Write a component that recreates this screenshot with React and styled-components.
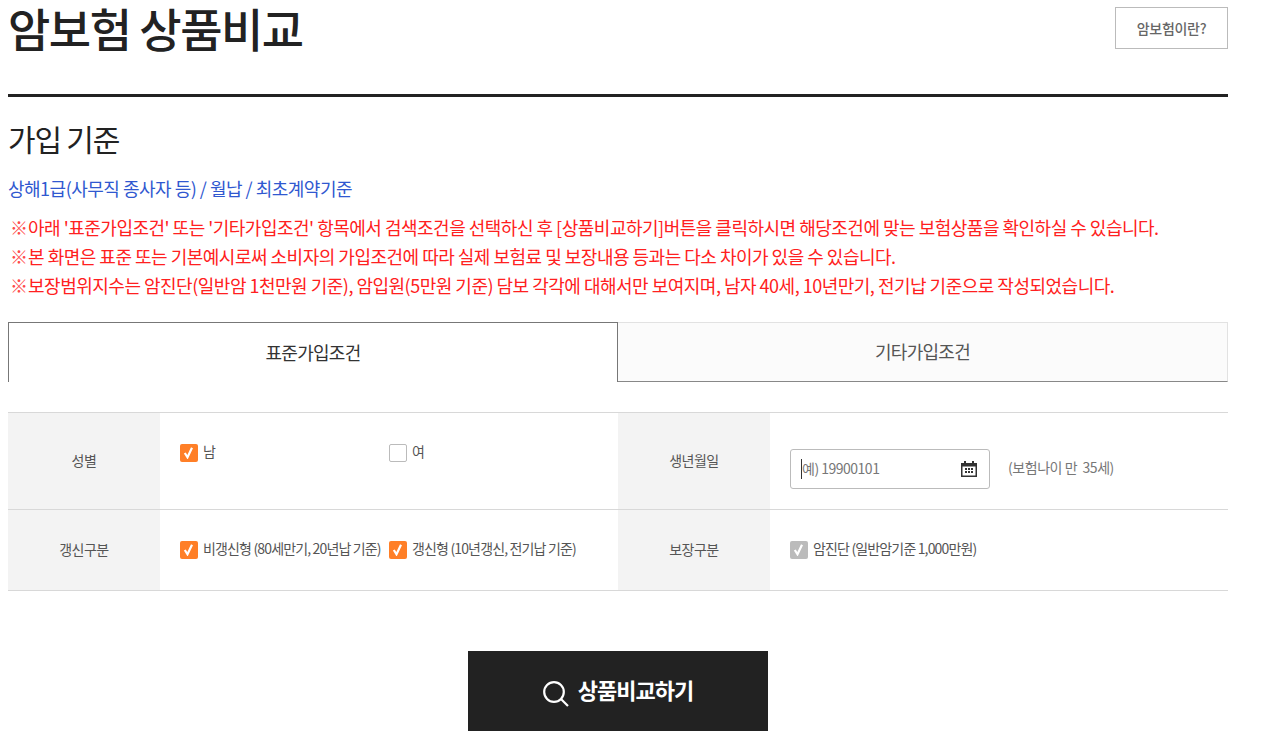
import React from "react";
import styled, { createGlobalStyle } from "styled-components";

const GlobalStyle = createGlobalStyle`
  html, body {
    margin: 0;
    padding: 0;
    background: #fff;
    font-family: "Noto Sans CJK KR", "Noto Sans", sans-serif;
    color: #222;
  }
`;

const Page = styled.div`
  width: 1220px;
  margin-left: 8px;
  padding-bottom: 20px;
`;

const Header = styled.header`
  display: flex;
  justify-content: space-between;
  align-items: flex-start;
  height: 94px;
  border-bottom: 3px solid #222;
`;

const Title = styled.h1`
  margin: 0;
  font-size: 46px;
  line-height: 54px;
  font-weight: 500;
  letter-spacing: -1.5px;
  color: #222;
`;

const HelpButton = styled.button`
  width: 113px;
  height: 42px;
  margin-top: 7px;
  background: #fff;
  border: 1px solid #bbb;
  font: 500 14px "Noto Sans CJK KR", sans-serif;
  letter-spacing: -0.3px;
  color: #666;
`;

const SectionTitle = styled.h2`
  margin: 22px 0 0;
  font-size: 30px;
  line-height: 38px;
  font-weight: 400;
  letter-spacing: -1.2px;
  color: #222;
`;

const Summary = styled.p`
  margin: 18px 0 0;
  font-size: 18px;
  line-height: 26px;
  letter-spacing: -0.5px;
  color: #3058d0;
`;

const Notes = styled.ul`
  list-style: none;
  margin: 12px 0 0;
  padding: 0;
`;

const Note = styled.li`
  font-size: 18px;
  line-height: 29px;
  letter-spacing: -0.5px;
  color: #ff2020;
  padding-left: 2px;
`;

const NoteMark = styled.span`
  word-spacing: -3px;
  color: #ff4a4a;
`;

const Tabs = styled.div`
  display: grid;
  grid-template-columns: 610px 610px;
  margin-top: 22px;
  height: 60px;
`;

const Tab = styled.div`
  display: flex;
  align-items: center;
  justify-content: center;
  padding-bottom: 2px;
  font-size: 18px;
  letter-spacing: -0.7px;
  box-sizing: border-box;
  ${(p) =>
    p.$active
      ? `
    background: #fff;
    color: #333;
    border: 1px solid #777;
    border-bottom: 0;
  `
      : `
    background: #fbfbfb;
    color: #555;
    border-top: 1px solid #e2e2e2;
    border-right: 1px solid #e2e2e2;
    border-bottom: 1px solid #888;
  `}
`;

const Table = styled.div`
  display: grid;
  grid-template-columns: 152px 458px 152px 458px;
  grid-template-rows: 97px 81px;
  margin-top: 30px;
  border-top: 1px solid #d8d8d8;
`;

const Label = styled.div`
  display: flex;
  align-items: center;
  justify-content: center;
  padding-bottom: 2px;
  background: #f3f3f3;
  border-bottom: 1px solid #d8d8d8;
  font-size: 14px;
  letter-spacing: -0.5px;
  color: #555;
`;

const Cell = styled.div`
  display: flex;
  align-items: ${(p) => (p.$pad ? "flex-start" : "center")};
  padding: ${(p) => p.$pad || "0"} 0 0 20px;
  background: #fff;
  border-bottom: 1px solid #d8d8d8;
  box-sizing: border-box;
`;

const CheckItem = styled.label`
  display: flex;
  align-items: center;
  width: ${(p) => p.$width || "auto"};
  font-size: 14px;
  letter-spacing: -0.85px;
  color: #555;
  white-space: nowrap;
`;

const CheckText = styled.span`
  padding-bottom: 4px;
`;

const Box = styled.span`
  display: flex;
  align-items: center;
  justify-content: center;
  width: 18px;
  height: 18px;
  margin-right: 5px;
  border-radius: 2px;
  box-sizing: border-box;
  background: ${(p) => (p.$disabled ? "#bbb" : p.$checked ? "#ff7f27" : "#fff")};
  border: ${(p) => (p.$checked ? "0" : "1px solid #bbb")};
`;

const DateRow = styled.div`
  display: flex;
  align-items: center;
`;

const DateBox = styled.div`
  display: flex;
  align-items: center;
  justify-content: space-between;
  width: 200px;
  height: 40px;
  padding: 0 12px 0 10px;
  box-sizing: border-box;
  border: 1px solid #bbb;
  border-radius: 3px;
  font-size: 14px;
  letter-spacing: -0.5px;
  color: #777;
`;

const Caret = styled.span`
  border-left: 1px solid #333;
  line-height: 18px;
  padding-bottom: 2px;
`;

const AgeText = styled.span`
  margin-left: 18px;
  padding-bottom: 4px;
  font-size: 14px;
  letter-spacing: -0.45px;
  color: #777;
  white-space: pre;
`;

const Actions = styled.div`
  display: flex;
  justify-content: center;
  margin-top: 60px;
`;

const CompareButton = styled.button`
  display: flex;
  align-items: center;
  justify-content: center;
  gap: 9px;
  width: 300px;
  height: 80px;
  background: #222;
  border: 0;
  color: #fff;
  font: 700 22px "Noto Sans CJK KR", sans-serif;
  letter-spacing: -1px;
`;

const ButtonText = styled.span`
  padding-bottom: 4px;
`;

const SearchSvg = styled.svg`
  margin-top: 5px;
`;

const Check = () => (
  <svg width="12" height="12" viewBox="0 0 12 12" fill="none">
    <path d="M1.8 6 L4.5 10.3 L9 0.8" stroke="#fff" strokeWidth="2.2" />
  </svg>
);

const CheckField = ({ checked, disabled, width, children }) => (
  <CheckItem $width={width}>
    <Box $checked={checked} $disabled={disabled}>
      {checked && <Check />}
    </Box>
    <CheckText>{children}</CheckText>
  </CheckItem>
);

const CalendarIcon = () => (
  <svg width="16" height="16" viewBox="0 0 16 16">
    <path
      fill="#333"
      fillRule="evenodd"
      d="M3 0h2v2h6V0h2v2h3v14H0V2h3V0zM1.5 5.5v9h13v-9h-13z"
    />
    <path
      fill="#333"
      d="M4 7h2v2H4zM7 7h2v2H7zM10 7h2v2h-2zM4 10h2v2H4zM7 10h2v2H7zM10 10h2v2h-2z"
    />
  </svg>
);

const SearchIcon = () => (
  <SearchSvg width="26" height="26" viewBox="0 0 26 26" fill="none" stroke="#fff" strokeWidth="2.2">
    <circle cx="11" cy="11" r="9.8" />
    <path d="M18 18 L25 25" />
  </SearchSvg>
);

const App = () => (
  <Page>
    <GlobalStyle />
    <Header>
      <Title>암보험 상품비교</Title>
      <HelpButton>암보험이란?</HelpButton>
    </Header>
    <SectionTitle>가입 기준</SectionTitle>
    <Summary>상해1급(사무직 종사자 등) / 월납 / 최초계약기준</Summary>
    <Notes>
      <Note><NoteMark>※ </NoteMark>아래 '표준가입조건' 또는 '기타가입조건' 항목에서 검색조건을 선택하신 후 [상품비교하기]버튼을 클릭하시면 해당조건에 맞는 보험상품을 확인하실 수 있습니다.</Note>
      <Note><NoteMark>※ </NoteMark>본 화면은 표준 또는 기본예시로써 소비자의 가입조건에 따라 실제 보험료 및 보장내용 등과는 다소 차이가 있을 수 있습니다.</Note>
      <Note><NoteMark>※ </NoteMark>보장범위지수는 암진단(일반암 1천만원 기준), 암입원(5만원 기준) 담보 각각에 대해서만 보여지며, 남자 40세, 10년만기, 전기납 기준으로 작성되었습니다.</Note>
    </Notes>
    <Tabs>
      <Tab $active>표준가입조건</Tab>
      <Tab>기타가입조건</Tab>
    </Tabs>
    <Table>
      <Label>성별</Label>
      <Cell $pad="28px">
        <CheckField checked width="209px">남</CheckField>
        <CheckField>여</CheckField>
      </Cell>
      <Label>생년월일</Label>
      <Cell $pad="36px">
        <DateRow>
          <DateBox>
            <Caret>예) 19900101</Caret>
            <CalendarIcon />
          </DateBox>
          <AgeText>(보험나이 만  35세)</AgeText>
        </DateRow>
      </Cell>
      <Label>갱신구분</Label>
      <Cell>
        <CheckField checked width="209px">비갱신형 (80세만기, 20년납 기준)</CheckField>
        <CheckField checked>갱신형 (10년갱신, 전기납 기준)</CheckField>
      </Cell>
      <Label>보장구분</Label>
      <Cell>
        <CheckField checked disabled>암진단 (일반암기준 1,000만원)</CheckField>
      </Cell>
    </Table>
    <Actions>
      <CompareButton>
        <SearchIcon />
        <ButtonText>상품비교하기</ButtonText>
      </CompareButton>
    </Actions>
  </Page>
);

export default App;
